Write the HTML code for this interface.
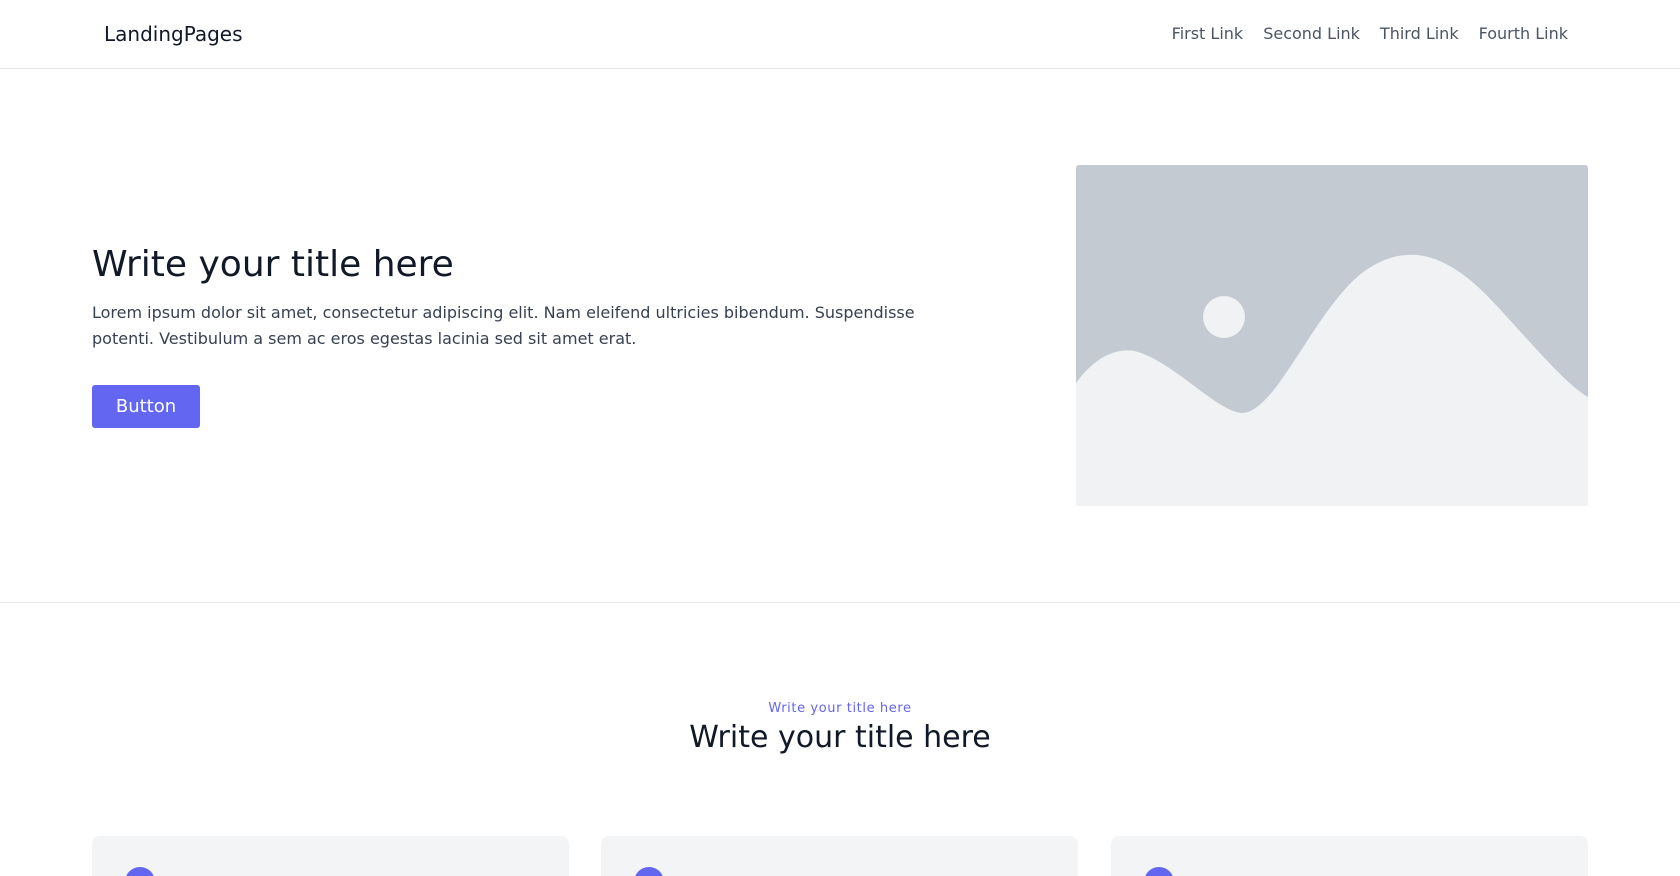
<!DOCTYPE html>
<html><head><meta charset="utf-8"><style>
*{margin:0;padding:0;box-sizing:border-box}
html,body{width:1680px;height:876px;overflow:hidden}
body{background:#fff;font-family:"DejaVu Sans","Liberation Sans",sans-serif;color:#111827;position:relative}
.nav{position:absolute;left:0;top:0;width:1680px;height:69px;border-bottom:1px solid #e5e7eb}
.logo{position:absolute;left:104px;top:22px;font-size:20px;color:#111827}
.links{position:absolute;right:112px;top:24px;font-size:16px;color:#4b5563;display:flex;gap:20px}
h1{position:absolute;left:92px;top:243px;font-size:36px;font-weight:normal;color:#111827;line-height:44px}
.p{position:absolute;left:92px;top:300px;font-size:16px;line-height:26px;color:#374151;width:880px}
.btn{position:absolute;left:92px;top:385px;width:108px;height:43px;background:#6366f1;color:#fff;font-size:18px;border-radius:3px;text-align:center;line-height:43px}
.img{position:absolute;left:1076px;top:165px;width:512px;height:341px;border-radius:3px;overflow:hidden;background:#c3cad2}
.div{position:absolute;left:0;top:602px;width:1680px;border-top:1px solid #e5e7eb}
.sub{position:absolute;left:0;width:1680px;top:701px;text-align:center;font-size:13px;letter-spacing:0.6px;color:#6366f1}
h2{position:absolute;left:0;width:1680px;top:720px;text-align:center;font-size:30px;font-weight:normal;color:#111827}
.card{position:absolute;top:836px;width:477px;height:40px;background:#f3f4f6;border-radius:8px 8px 0 0;overflow:hidden}
.ic{position:absolute;left:33px;top:31px;width:30px;height:30px;border-radius:50%;background:#6366f1}
.ct{position:absolute;left:78px;top:39px;font-size:18px;color:#111827}
</style></head><body>
<div class="nav"><div class="logo">LandingPages</div>
<div class="links"><span>First Link</span><span>Second Link</span><span>Third Link</span><span>Fourth Link</span></div></div>
<h1>Write your title here</h1>
<div class="p">Lorem ipsum dolor sit amet, consectetur adipiscing elit. Nam eleifend ultricies bibendum. Suspendisse<br>potenti. Vestibulum a sem ac eros egestas lacinia sed sit amet erat.</div>
<div class="btn">Button</div>
<div class="img"><svg width="512" height="341" viewBox="0 0 512 341">
<circle cx="148" cy="152" r="21" fill="#f1f2f4"/>
<path d="M0 218 C20 190 45 180 65 188 C100 200 140 245 165 248 C200 250 240 140 290 105 C330 78 370 85 420 140 C450 172 490 220 512 232 L512 341 L0 341 Z" fill="#f1f2f4"/>
</svg></div>
<div class="div"></div>
<div class="sub">Write your title here</div>
<h2>Write your title here</h2>
<div class="card" style="left:92px"><div class="ic"></div><div class="ct">Shooting Stars</div></div>
<div class="card" style="left:601px"><div class="ic"></div><div class="ct">Shooting Stars</div></div>
<div class="card" style="left:1111px"><div class="ic"></div><div class="ct">Shooting Stars</div></div>
</body></html>
